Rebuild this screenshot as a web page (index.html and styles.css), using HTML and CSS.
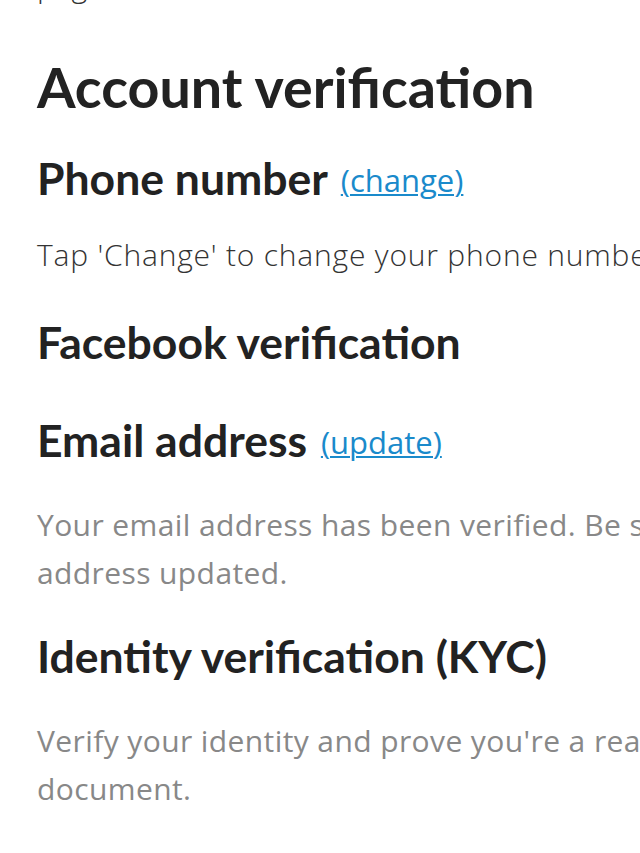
FILE: index.html
```html
<!DOCTYPE html>
<html lang="en">
<head>
<meta charset="utf-8">
<title>Account verification</title>
<link rel="stylesheet" href="styles.css">
</head>
<body>
<main class="page">
  <p class="intro">page.</p>
  <h1 class="title">Account verification</h1>

  <section class="section section--phone">
    <h2 class="heading">Phone number <a class="action" href="#">(change)</a></h2>
    <p class="hint">Tap 'Change' to change your phone number.</p>
  </section>

  <section class="section section--facebook">
    <h2 class="heading">Facebook verification</h2>
  </section>

  <section class="section section--email">
    <h2 class="heading">Email address <a class="action" href="#">(update)</a></h2>
    <p class="text">Your email address has been verified. Be sure to keep your email address updated.</p>
  </section>

  <section class="section section--kyc">
    <h2 class="heading">Identity verification (KYC)</h2>
    <p class="text">Verify your identity and prove you're a real person with a photo ID document.</p>
  </section>
</main>
</body>
</html>
```

FILE: styles.css
```css
html, body {
  margin: 0;
  padding: 0;
  background: #ffffff;
}

body {
  overflow: hidden;
  font-family: "Open Sans", "Noto Sans", sans-serif;
  color: #222222;
}

.page {
  width: 1080px;
  margin-top: -38px;
  padding-left: 37px;
  box-sizing: border-box;
}

.intro {
  margin: 0;
  font-size: 30px;
  line-height: 48px;
  font-weight: 300;
  letter-spacing: 0.4px;
  color: #333333;
}

.title {
  margin: 45px 0 0;
  font-family: "Lato", "Open Sans", sans-serif;
  font-size: 55.6px;
  line-height: 64px;
  font-weight: 700;
  color: #222222;
}

.section {
  display: flex;
  flex-direction: column;
  gap: 35px;
}

.section--phone {
  margin-top: 33px;
}

.section--facebook {
  margin-top: 45px;
}

.section--email {
  margin-top: 46px;
}

.section--kyc {
  margin-top: 33px;
}

.heading {
  margin: 0;
  font-family: "Lato", "Open Sans", sans-serif;
  font-size: 44.5px;
  line-height: 52px;
  font-weight: 700;
  color: #222222;
}

.action {
  display: inline-block;
  margin-left: 3px;
  font-family: "Open Sans", "Noto Sans", sans-serif;
  font-size: 31px;
  line-height: 30px;
  font-weight: 400;
  vertical-align: 3px;
  color: #1a8acb;
  text-decoration: underline;
  text-decoration-thickness: 2px;
  text-underline-offset: 2px;
}

.hint {
  margin: 0;
  font-size: 30px;
  line-height: 32px;
  font-weight: 300;
  letter-spacing: 0.8px;
  color: #333333;
  white-space: nowrap;
}

.text {
  max-width: 1000px;
  margin: 0;
  font-size: 30px;
  line-height: 48px;
  font-weight: 400;
  letter-spacing: 0.4px;
  color: #888888;
}
```
